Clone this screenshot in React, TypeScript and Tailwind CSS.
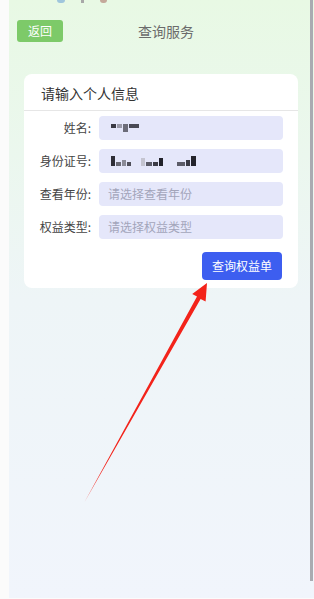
import React from "react"

type Field = {
  label: string
  value?: "name" | "id"
  placeholder?: string
}

const fields: Field[] = [
  { label: "姓名:", value: "name" },
  { label: "身份证号:", value: "id" },
  { label: "查看年份:", placeholder: "请选择查看年份" },
  { label: "权益类型:", placeholder: "请选择权益类型" },
]

// pixelated blur blocks standing in for masked personal data
function Masked({ kind }: { kind: "name" | "id" }) {
  if (kind === "name") {
    return (
      <div className="flex items-start gap-[1px] ml-[12px]">
        <span className="w-[5px] h-[4px] bg-[#3a3a44]" />
        <span className="w-[5px] h-[4px] bg-[#9a9aa8]" />
        <span className="w-[5px] h-[8px] bg-[#6c6c78]" />
        <span className="w-[10px] h-[4px] bg-[#4a4a55]" />
      </div>
    )
  }
  return (
    <div className="flex items-end gap-[1px] ml-[12px]">
      <span className="w-[4px] h-[10px] bg-[#2e2e36]" />
      <span className="w-[5px] h-[4px] bg-[#6a6a74]" />
      <span className="w-[4px] h-[6px] bg-[#8a8a96]" />
      <span className="w-[4px] h-[4px] bg-[#50505a]" />
      <span className="w-[8px]" />
      <span className="w-[4px] h-[8px] bg-[#c4c4d0]" />
      <span className="w-[6px] h-[4px] bg-[#5a5a66]" />
      <span className="w-[5px] h-[4px] bg-[#3c3c46]" />
      <span className="w-[4px] h-[8px] bg-[#22222a]" />
      <span className="w-[12px]" />
      <span className="w-[8px] h-[4px] bg-[#5c5c68]" />
      <span className="w-[4px] h-[6px] bg-[#3a3a44]" />
      <span className="w-[5px] h-[10px] bg-[#24242c]" />
    </div>
  )
}

export default function App() {
  return (
    <div
      className="relative w-[314px] h-[599px] flex bg-[#fbfbfb] overflow-hidden"
      style={{ fontFamily: '"Noto Sans CJK SC", "Noto Sans", sans-serif' }}
    >
      <div className="w-[9px] shrink-0" />

      <div className="flex-1 h-[598px] bg-gradient-to-b from-[#e8f9e4] via-[#eef5f7] to-[#f1f5fc]">
        {/* cut-off status icons */}
        <div className="flex items-start h-[3px] pl-[48px] gap-[16px]">
          <span className="w-[8px] h-[3px] rounded-b bg-[#9fc6dc]" />
          <span className="w-[3px] h-[3px] bg-[#a8a8a8]" />
          <span className="w-[7px] h-[3px] rounded-b bg-[#c4a99a]" />
        </div>

        <div className="flex items-center mt-[17px] pl-[8px]">
          <button className="w-[46px] h-[22px] rounded-[3px] bg-[#7dca69] text-white text-[12px] leading-none">
            返回
          </button>
          <div className="ml-[75px] text-[14px] text-[#6b6b6b]">查询服务</div>
        </div>

        <div className="ml-[15px] mt-[32px] w-[274px] bg-white rounded-[8px]">
          <div className="h-[37px] flex items-center pl-[17px] pt-[2px] text-[14px] text-[#333] border-b border-[#e6e6e6]">
            请输入个人信息
          </div>

          <div className="flex flex-col gap-[9px] pt-[5px]">
            {fields.map((f) => (
              <div key={f.label} className="flex items-center">
                <div className="w-[67px] text-right text-[12px] text-[#444]">{f.label}</div>
                <div className="ml-[8px] w-[184px] h-[24px] rounded-[4px] bg-[#e5e7fa] flex items-center">
                  {f.value ? (
                    <Masked kind={f.value} />
                  ) : (
                    <span className="ml-[9px] text-[12px] text-[#a3a5ba]">{f.placeholder}</span>
                  )}
                </div>
              </div>
            ))}
          </div>

          <div className="flex justify-end pr-[16px] pt-[13px] pb-[8px]">
            <button className="w-[80px] h-[28px] rounded-[4px] bg-[#3d5ef0] text-white text-[12px]">
              查询权益单
            </button>
          </div>
        </div>
      </div>

      {/* scrollbar */}
      <div className="absolute right-[1px] top-0 w-[3px] h-[581px] bg-[#a9abb1]" />

      {/* annotation arrow */}
      <svg className="absolute left-0 top-0 pointer-events-none" width="314" height="599">
        <polygon
          points="84,503 200.6,299 205.6,301.5 207,283 192.2,294 197,296.6"
          fill="#f3231a"
        />
      </svg>
    </div>
  )
}
